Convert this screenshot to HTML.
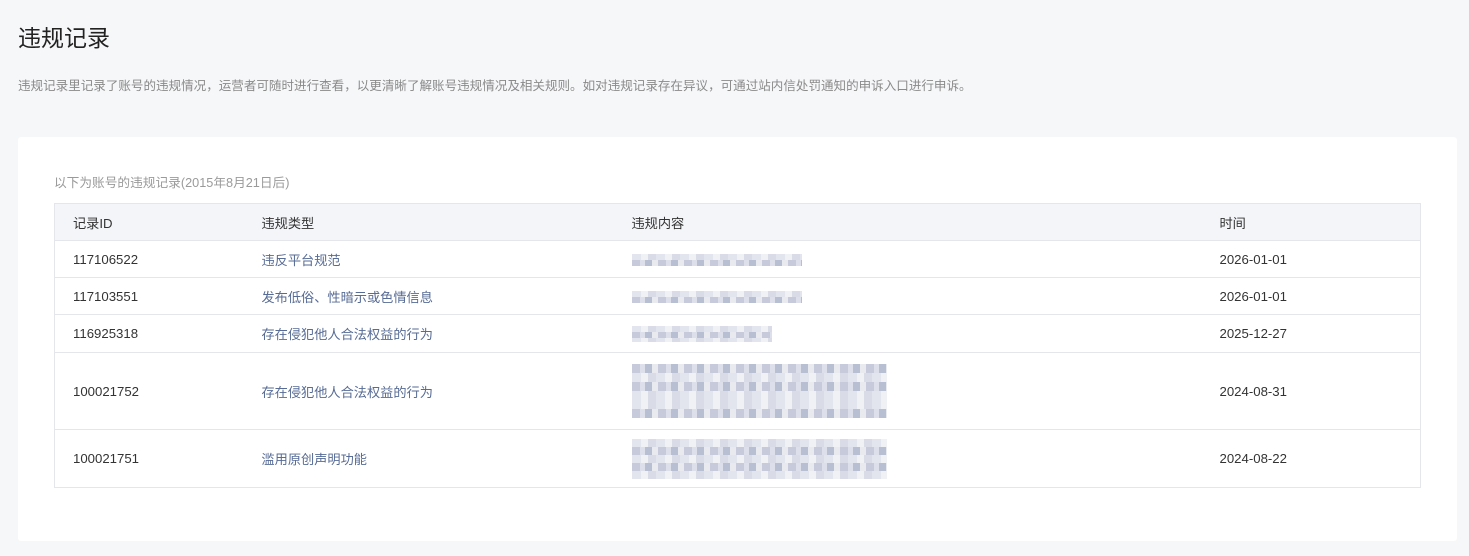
<!DOCTYPE html>
<html><head><meta charset="utf-8"><style>
*{margin:0;padding:0;box-sizing:border-box}
body{width:1469px;height:556px;background:#f6f7f9;font-family:"Liberation Sans","Noto Sans CJK SC",sans-serif;position:relative;overflow:hidden;color:#333}
h1{position:absolute;left:18px;top:22px;font-size:23px;font-weight:normal;color:#222;line-height:32px}
.desc{position:absolute;left:18px;top:78px;font-size:12.55px;color:#8a8a8a;line-height:16px;white-space:nowrap}
.card{position:absolute;left:18px;top:137px;width:1439px;height:404px;background:#fff;border-radius:3px}
.cap{position:absolute;left:36px;top:38px;font-size:12.7px;color:#9a9a9a;line-height:16px;white-space:nowrap}
table{position:absolute;left:36px;top:66px;width:1367px;border-collapse:collapse;font-size:13.2px}
td,th{border-top:1px solid #e4e6eb;text-align:left;font-weight:normal;padding:0;vertical-align:middle;color:#333}
table{border:1px solid #e4e6eb}
th{background:#f4f5f9;height:37px}
td.c1,th.c1{padding-left:18px;width:207px}
.c2{width:370px}
.c3{width:588px}
.t{color:#576b95}
.blur{display:block;height:6px;background:repeating-linear-gradient(90deg,#c6cadb 0 8px,#dde0ea 8px 13px,#b9bfd2 13px 20px,#e8eaf0 20px 26px)}
.blur.l{background:repeating-linear-gradient(90deg,#e3e5ee 0 9px,#f0f1f5 9px 16px,#d9dce7 16px 24px)}
.big .blur{height:9px}
.mid .blur{height:8px}
</style></head><body>
<h1>违规记录</h1>
<div class="desc">违规记录里记录了账号的违规情况，运营者可随时进行查看，以更清晰了解账号违规情况及相关规则。如对违规记录存在异议，可通过站内信处罚通知的申诉入口进行申诉。</div>
<div class="card">
<div class="cap">以下为账号的违规记录(2015年8月21日后)</div>
<table>
<tr><th class="c1">记录ID</th><th class="c2">违规类型</th><th class="c3">违规内容</th><th>时间</th></tr>
<tr style="height:37px"><td class="c1">117106522</td><td class="t">违反平台规范</td><td><div style="width:170px;margin-top:2px"><span class="blur l"></span><span class="blur"></span></div></td><td>2026-01-01</td></tr>
<tr style="height:37px"><td class="c1">117103551</td><td class="t">发布低俗、性暗示或色情信息</td><td><div style="width:170px;margin-top:2px"><span class="blur l"></span><span class="blur"></span></div></td><td>2026-01-01</td></tr>
<tr style="height:38px"><td class="c1">116925318</td><td class="t">存在侵犯他人合法权益的行为</td><td><div style="width:140px"><span class="blur l"></span><span class="blur"></span><span class="blur l" style="height:4px"></span></div></td><td>2025-12-27</td></tr>
<tr style="height:77px"><td class="c1">100021752</td><td class="t">存在侵犯他人合法权益的行为</td><td><div class="big" style="width:255px"><span class="blur"></span><span class="blur l"></span><span class="blur"></span><span class="blur l"></span><span class="blur l"></span><span class="blur"></span></div></td><td>2024-08-31</td></tr>
<tr style="height:58px"><td class="c1">100021751</td><td class="t">滥用原创声明功能</td><td><div class="mid" style="width:255px"><span class="blur l"></span><span class="blur"></span><span class="blur l"></span><span class="blur"></span><span class="blur l"></span></div></td><td>2024-08-22</td></tr>
</table>
</div>
</body></html>
